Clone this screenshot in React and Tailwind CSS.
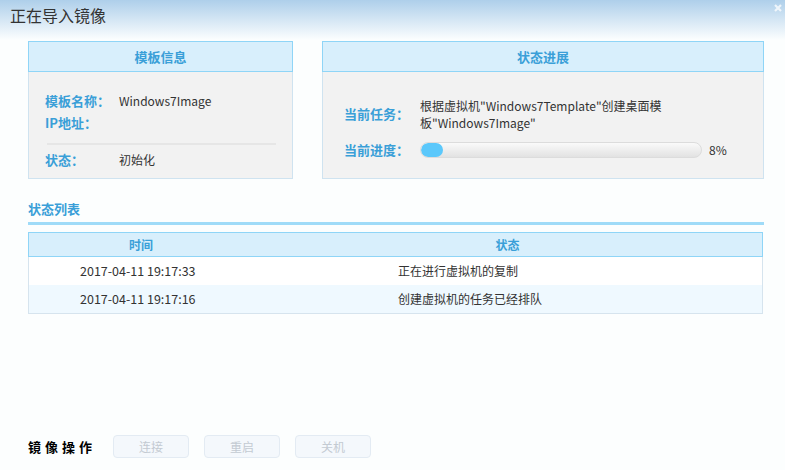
import React from "react";

const font = { fontFamily: '"Noto Sans CJK SC", "Noto Sans", sans-serif' };

function Panel({ title, className, children }) {
  return (
    <div className={`flex flex-col border border-[#cfe3f0] bg-[#f2f2f2] ${className}`}>
      <div className="h-[31px] flex items-center justify-center bg-[#d8effc] border border-[#8fd5f7] -m-px mb-0 text-[13px] font-bold text-[#3a9fd8]">
        {title}
      </div>
      {children}
    </div>
  );
}

export default function App() {
  const rows = [
    { time: "2017-04-11 19:17:33", status: "正在进行虚拟机的复制" },
    { time: "2017-04-11 19:17:16", status: "创建虚拟机的任务已经排队" },
  ];
  const progress = 8;

  return (
    <div className="w-[785px] h-[470px] bg-[#fcfefe] relative overflow-hidden text-[#333]" style={font}>
      <div className="h-[40px] bg-gradient-to-b from-[#aecfea] to-[#fcfefe] pl-[10px] pt-[3px] text-[16px] text-[#333]">
        正在导入镜像
      </div>
      <svg className="absolute right-[3px] top-[4px]" width="8" height="8" viewBox="0 0 8 8">
        <path d="M1 1L7 7M7 1L1 7" stroke="#ffffff" strokeOpacity="0.75" strokeWidth="2.2" />
      </svg>

      <div className="flex gap-[29px] pl-[28px] pt-px">
        <Panel title="模板信息" className="w-[265px] h-[138px]">
          <div className="px-[16px] pt-[18px] text-[12px]">
            <div className="flex items-center h-[22px]">
              <span className="w-[74px] font-bold text-[13px] text-[#3a9fd8]">模板名称：</span>
              <span>Windows7Image</span>
            </div>
            <div className="flex items-center h-[22px]">
              <span className="w-[74px] font-bold text-[13px] text-[#3a9fd8]">IP地址：</span>
            </div>
            <div className="mt-[9px] ml-[2px] border-t-2 border-[#e6e6e6]"></div>
            <div className="flex items-center h-[30px]">
              <span className="w-[74px] font-bold text-[13px] text-[#3a9fd8]">状态：</span>
              <span>初始化</span>
            </div>
          </div>
        </Panel>

        <Panel title="状态进展" className="w-[442px] h-[138px]">
          <div className="pl-[21px] pt-[25px] text-[12px]">
            <div className="flex items-center">
              <span className="w-[76px] font-bold text-[13px] text-[#3a9fd8]">当前任务：</span>
              <span className="w-[270px] leading-[17px]">根据虚拟机"Windows7Template"创建桌面模板"Windows7Image"</span>
            </div>
            <div className="flex items-center mt-[9px]">
              <span className="w-[76px] font-bold text-[13px] text-[#3a9fd8]">当前进度：</span>
              <div className="w-[282px] h-[16px] rounded-full border border-[#dcdcdc] bg-gradient-to-b from-[#fafafa] to-[#e2e2e2] overflow-hidden">
                <div className="h-full rounded-full bg-[#5bc8fb]" style={{ width: `${progress}%` }}></div>
              </div>
              <span className="ml-[7px]">{progress}%</span>
            </div>
          </div>
        </Panel>
      </div>

      <div className="ml-[28px] mr-[22px] mt-[20px]">
        <div className="text-[13px] font-bold text-[#3a9fd8] leading-[20px]">状态列表</div>
        <div className="mt-[3px] h-[3px] bg-[#9fdbf8] mr-[-1px]"></div>
        <div className="mt-[7px] border border-[#d6e4ee] text-[12.5px]">
          <div className="grid grid-cols-[224px_1fr] h-[25px] items-center bg-[#d8effc] border border-[#8fd5f7] -m-px mb-0 font-bold text-[12px] text-[#3a9fd8]">
            <span className="text-center">时间</span>
            <span className="text-center">状态</span>
          </div>
          {rows.map((r, i) => (
            <div
              key={i}
              className={`grid grid-cols-[224px_1fr] h-[28px] items-center ${i % 2 ? "bg-[#eff9ff]" : "bg-white"}`}
            >
              <span className="pl-[51px]">{r.time}</span>
              <span className="pl-[145px] text-[12px]">{r.status}</span>
            </div>
          ))}
        </div>
      </div>

      <div className="absolute left-[28px] top-[435px] flex items-center">
        <span className="w-[85px] text-[13px] font-bold text-black tracking-[4px]">镜像操作</span>
        <div className="flex gap-[15px]">
          {["连接", "重启", "关机"].map((b) => (
            <button
              key={b}
              className="w-[76px] h-[23px] rounded-[4px] bg-[#f4f8fc] border border-[#e3ebf3] text-[12px] text-[#c3cad2]"
            >
              {b}
            </button>
          ))}
        </div>
      </div>
    </div>
  );
}
